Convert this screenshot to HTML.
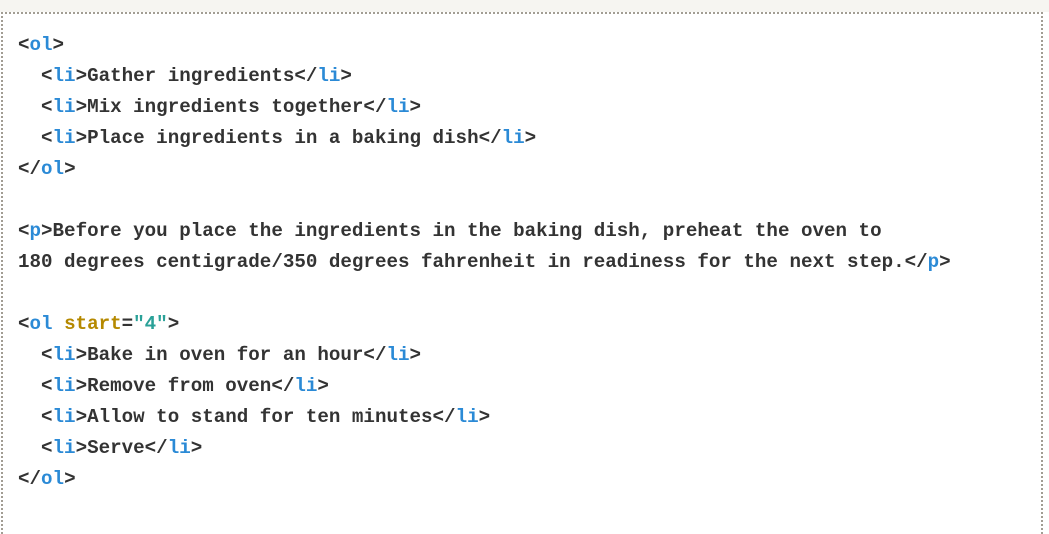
<!DOCTYPE html>
<html><head><style>
html,body{margin:0;padding:0;width:1049px;height:508px;overflow:hidden;background:#fff;}
.top{position:absolute;left:0;top:0;width:1049px;height:12px;background:#f6f5f1;}
.box{position:absolute;left:1px;top:12px;width:1038px;height:520px;border-top:2px dotted #a29d93;border-left:2px dotted #a29d93;border-right:2px dotted #a29d93;}
pre{position:absolute;left:18px;top:30px;margin:0;font-family:"Liberation Mono",monospace;font-weight:bold;font-size:19.2px;line-height:31px;color:#333;}
.t{color:#2b8ad6;}.a{color:#b58900;}.v{color:#2aa198;}
</style></head><body>
<div class="top"></div><div class="box"></div>
<pre>&lt;<span class="t">ol</span>&gt;
  &lt;<span class="t">li</span>&gt;Gather ingredients&lt;/<span class="t">li</span>&gt;
  &lt;<span class="t">li</span>&gt;Mix ingredients together&lt;/<span class="t">li</span>&gt;
  &lt;<span class="t">li</span>&gt;Place ingredients in a baking dish&lt;/<span class="t">li</span>&gt;
&lt;/<span class="t">ol</span>&gt;

&lt;<span class="t">p</span>&gt;Before you place the ingredients in the baking dish, preheat the oven to
180 degrees centigrade/350 degrees fahrenheit in readiness for the next step.&lt;/<span class="t">p</span>&gt;

&lt;<span class="t">ol</span> <span class="a">start</span>=<span class="v">"4"</span>&gt;
  &lt;<span class="t">li</span>&gt;Bake in oven for an hour&lt;/<span class="t">li</span>&gt;
  &lt;<span class="t">li</span>&gt;Remove from oven&lt;/<span class="t">li</span>&gt;
  &lt;<span class="t">li</span>&gt;Allow to stand for ten minutes&lt;/<span class="t">li</span>&gt;
  &lt;<span class="t">li</span>&gt;Serve&lt;/<span class="t">li</span>&gt;
&lt;/<span class="t">ol</span>&gt;</pre>
</body></html>
